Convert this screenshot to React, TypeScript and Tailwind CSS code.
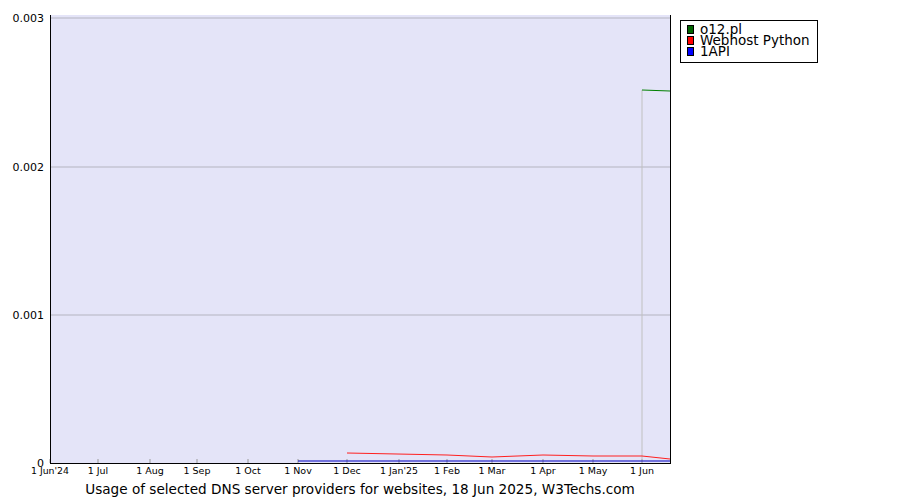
export default function App() {
  const months = [
    ['1 Jun\'24', 50], ['1 Jul', 98], ['1 Aug', 150], ['1 Sep', 197], ['1 Oct', 248], ['1 Nov', 298],
    ['1 Dec', 347], ['1 Jan\'25', 399], ['1 Feb', 447], ['1 Mar', 492], ['1 Apr', 543], ['1 May', 593], ['1 Jun', 642],
  ] as const
  const yTicks = [['0', 463], ['0.001', 315], ['0.002', 167], ['0.003', 18]] as const

  return (
    <div className="relative w-[900px] h-[500px] bg-white" style={{ fontFamily: '"DejaVu Sans", Verdana, sans-serif' }}>
      <svg width="900" height="500" className="absolute left-0 top-0">
        <rect x="50" y="15" width="620" height="448" fill="#e4e4f8" />
        {yTicks.slice(1).map(([, y]) => (
          <line key={y} x1="50" x2="670" y1={y} y2={y} stroke="#b4b4c0" strokeWidth="1" />
        ))}
        {yTicks.map(([t, y]) => (
          <text key={t} x="44" y={y + 4} textAnchor="end" fontSize="11" fill="#000">{t}</text>
        ))}
        {months.map(([m, x]) => (
          <g key={m}>
            <line x1={x} x2={x} y1="459" y2="463" stroke="#999" />
            <text x={x} y="474" textAnchor="middle" fontSize="9.5" fill="#000" textLength={m.length > 6 ? 38 : undefined} lengthAdjust="spacingAndGlyphs">{m}</text>
          </g>
        ))}
        <line x1="642" x2="642" y1="90" y2="463" stroke="#c0c0c0" />
        <polyline points="642,90 670,91" fill="none" stroke="#008000" strokeWidth="1" />
        <polyline points="347,453 447,455 492,457 543,455 593,456 642,456 670,459" fill="none" stroke="#ff2020" strokeWidth="1" />
        <polyline points="298,461 670,461" fill="none" stroke="#0000c0" strokeWidth="1" />
        <line x1="50.5" x2="50.5" y1="15" y2="463" stroke="#000" />
        <line x1="670.5" x2="670.5" y1="15" y2="463" stroke="#000" />
        <line x1="50" x2="671" y1="463.5" y2="463.5" stroke="#000" />
      </svg>

      <div className="absolute left-[680px] top-[20px] w-[138px] h-[43px] border border-black bg-white pl-[6px] pt-[3px] text-[13.5px] leading-[11px] text-black">
        {[['o12.pl', 'bg-[#006400]'], ['Webhost Python', 'bg-[#ff0000]'], ['1API', 'bg-[#0000ff]']].map(([n, c]) => (
          <div key={n} className="flex items-center gap-[6px] h-[11px]">
            <span className={`w-[7px] h-[9px] border border-black ${c}`} />
            <span>{n}</span>
          </div>
        ))}
      </div>

      <div className="absolute left-0 top-[479px] w-[720px] text-center text-[13.6px] text-black">
        Usage of selected DNS server providers for websites, 18 Jun 2025, W3Techs.com
      </div>
    </div>
  )
}
